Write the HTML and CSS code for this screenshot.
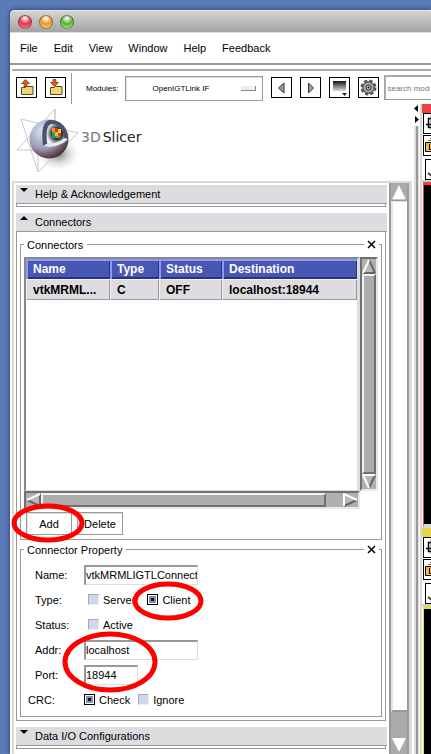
FILE: index.html
```
<!DOCTYPE html>
<html lang="en">
<head>
  <meta charset="UTF-8">
  <title>3D Slicer</title>
  <meta name="viewport" content="width=device-width, initial-scale=1.0">
  <link rel="stylesheet" href="styles.css">
</head>
<body>
  <div class="window">
    <div class="titlebar">
      <span class="light red"></span>
      <span class="light orange"></span>
      <span class="light green"></span>
    </div>

    <nav class="menubar">
      <a href="#">File</a>
      <a href="#">Edit</a>
      <a href="#">View</a>
      <a href="#">Window</a>
      <a href="#">Help</a>
      <a href="#">Feedback</a>
    </nav>

    <div class="toolbar">
      <button class="tool" aria-label="Load scene">
        <svg width="19" height="19" viewBox="0 0 19 19"><path d="M4.500 9.500h4l1-1h6.500v8h-11.500z" fill="#ecd67c" stroke="#5a4a18"/><path d="M8.500 1.500l4 4h-2.500v3h-3v-3h-2.500z" fill="#d9601a" stroke="#7a2c08" stroke-width=".7"/></svg>
      </button>
      <button class="tool" aria-label="Save scene">
        <svg width="19" height="19" viewBox="0 0 19 19"><path d="M4.500 9.500h4l1-1h6.500v8h-11.500z" fill="#ecd67c" stroke="#5a4a18"/><path d="M7 1.500h3v3h2.500l-4 4-4-4h2.500z" fill="#d9601a" stroke="#7a2c08" stroke-width=".7"/></svg>
      </button>
      <div class="modules">
        <label for="module">Modules:</label>
        <div class="module-select">
          <select id="module"><option>OpenIGTLink IF</option></select>
          <span class="knob"></span>
        </div>
      </div>
      <button class="tool" aria-label="Previous module">
        <svg width="19" height="19" viewBox="0 0 19 19"><path d="M12 5v10l-5.500-5z" fill="#999" stroke="#333"/></svg>
      </button>
      <button class="tool" aria-label="Next module">
        <svg width="19" height="19" viewBox="0 0 19 19"><path d="M7.500 5v10l5-5z" fill="#999" stroke="#333"/></svg>
      </button>
      <button class="tool" aria-label="Module history">
        <svg width="19" height="19" viewBox="0 0 19 19"><defs><linearGradient id="hist" x2="0" y2="1"><stop offset="0" stop-color="#111"/><stop offset="1" stop-color="#ddd"/></linearGradient></defs><path d="M3 3h13v10H3z" fill="url(#hist)"/><path d="M12 15h5l-2.500 3z" fill="#222"/></svg>
      </button>
      <button class="tool" aria-label="Module finder">
        <svg width="19" height="19" viewBox="0 0 19 19"><circle cx="9.500" cy="9.500" r="6.500" fill="#888" stroke="#555" stroke-width="3" stroke-dasharray="3.100 2"/><circle cx="9.500" cy="9.500" r="5.500" fill="#aaa" stroke="#555"/><circle cx="9.500" cy="9.500" r="2.500" fill="#ddd" stroke="#222"/><path d="M8.500 9.500h2M9.500 8.500v2" stroke="#000"/></svg>
      </button>
      <input class="search" type="text" aria-label="Search modules" placeholder="search modules">
    </div>

    <div class="main">
      <div class="left">
        <div class="logo">
          <svg width="66" height="66" viewBox="0 0 66 66">
            <defs>
              <radialGradient id="ball" cx=".35" cy=".3" r=".8"><stop offset="0" stop-color="#e2e4f0"/><stop offset=".55" stop-color="#9a9eb8"/><stop offset=".85" stop-color="#604048"/><stop offset="1" stop-color="#2a1d2c"/></radialGradient>
              <radialGradient id="shade"><stop offset="0" stop-color="#777"/><stop offset="1" stop-color="#fff" stop-opacity="0"/></radialGradient>
              <radialGradient id="core" cx=".6" cy=".5" r=".6"><stop offset="0" stop-color="#000"/><stop offset=".5" stop-color="#333"/><stop offset="1" stop-color="#f2f2f6"/></radialGradient>
            </defs>
            <ellipse cx="42" cy="46" rx="24" ry="18" fill="url(#shade)"/>
            <path d="M39 1L1 42h37zM5 11l57 14-40 39zM39 1v36M22 64V36" fill="none" stroke="#c8c8c8"/>
            <circle cx="33" cy="31" r="19.500" fill="url(#ball)"/>
            <path d="M27 38c-2-16 0-24 6-26 11-1 19 7 19 19-5 6-16 9-25 7z" fill="#4a5370"/>
            <path d="M27 38c5 2 18 1 25-7l-4-1c-5 4-11 5-16 5z" fill="#e4e6f0"/>
            <path d="M31 35c-1-12 0-17 4-19 8 0 13 6 13 14-4 4-10 5-17 5z" fill="url(#core)"/>
            <path d="M36 20h3v4h-3z" fill="#e8a020"/><path d="M39 20h3v4h-3z" fill="#d83020"/><path d="M42 21h3v4h-3z" fill="#f0d030"/>
            <path d="M36 24h3v4h-3z" fill="#30a040"/><path d="M39 24h3v4h-3z" fill="#f0c020"/><path d="M42 25h3v4h-3z" fill="#e04020"/>
            <path d="M36 28h4v2h-4z" fill="#2090c0"/><path d="M40 28h4v2h-4z" fill="#50b040"/>
          </svg>
          <div class="logo-text"><span>3D</span><b>Slicer</b></div>
        </div>

        <div class="scroll-area">
          <div class="panels">
            <section class="panel">
              <h2 class="closed">Help &amp; Acknowledgement</h2>
              <div class="panel-end"></div>
            </section>

            <section class="panel">
              <h2 class="open">Connectors</h2>
              <div class="panel-body">
                <div class="frame">
                  <div class="frame-title"><span>Connectors</span><button class="close" aria-label="Close connectors"><svg width="9" height="9" viewBox="0 0 9 9"><path d="M1 1l7 7M8 1L1 8" stroke="#000" stroke-width="1.500"/></svg></button></div>
                  <div class="frame-body list-body">
                    <div class="list">
                      <div class="list-main">
                        <table>
                          <thead>
                            <tr><th class="c-name">Name</th><th class="c-type">Type</th><th class="c-status">Status</th><th>Destination</th></tr>
                          </thead>
                          <tbody>
                            <tr><td>vtkMRML...</td><td>C</td><td>OFF</td><td>localhost:18944</td></tr>
                          </tbody>
                        </table>
                      </div>
                      <div class="vbar">
                        <svg width="14" height="15" viewBox="0 0 14 15"><path d="M7 1l6 13H1z" fill="#b8b8b8"/><path d="M13 14L7 1" stroke="#666" stroke-width="2"/><path d="M1 14h12" stroke="#666" stroke-width="2"/><path d="M1 14L7 1" stroke="#fff" stroke-width="2"/></svg>
                        <div class="vthumb"></div>
                        <svg width="14" height="15" viewBox="0 0 14 15"><path d="M1 1h12L7 14z" fill="#b8b8b8"/><path d="M13 1L7 14" stroke="#666" stroke-width="2"/><path d="M13 1H1l6 13" fill="none" stroke="#fff" stroke-width="2"/></svg>
                      </div>
                      <div class="hbar">
                        <svg width="15" height="14" viewBox="0 0 15 14"><path d="M1 7l13-6v12z" fill="#b8b8b8"/><path d="M14 1v12L1 7" fill="none" stroke="#666" stroke-width="2"/><path d="M1 7l13-6" stroke="#fff" stroke-width="2"/></svg>
                        <div class="hthumb"></div>
                        <svg width="15" height="14" viewBox="0 0 15 14"><path d="M1 1v12l13-6z" fill="#b8b8b8"/><path d="M1 13l13-6" stroke="#666" stroke-width="2"/><path d="M1 13V1l13 6" fill="none" stroke="#fff" stroke-width="2"/></svg>
                      </div>
                    </div>
                    <div class="buttons">
                      <button>Add</button>
                      <button>Delete</button>
                    </div>
                  </div>
                </div>

                <div class="frame">
                  <div class="frame-title"><span>Connector Property</span><button class="close" aria-label="Close connector property"><svg width="9" height="9" viewBox="0 0 9 9"><path d="M1 1l7 7M8 1L1 8" stroke="#000" stroke-width="1.500"/></svg></button></div>
                  <form class="frame-body props">
                    <div class="row">
                      <label for="name">Name:</label>
                      <input class="text" id="name" type="text" value="vtkMRMLIGTLConnector">
                    </div>
                    <div class="row">
                      <span class="caption">Type:</span>
                      <div class="choices indent">
                        <label><input type="radio" name="type">Server</label>
                        <label><input type="radio" name="type" checked>Client</label>
                      </div>
                    </div>
                    <div class="row">
                      <span class="caption">Status:</span>
                      <div class="choices indent">
                        <label><input type="checkbox">Active</label>
                      </div>
                    </div>
                    <div class="row">
                      <label for="addr">Addr:</label>
                      <input class="text" id="addr" type="text" value="localhost">
                    </div>
                    <div class="row">
                      <label for="port">Port:</label>
                      <input class="text short" id="port" type="text" value="18944">
                    </div>
                    <div class="row">
                      <span class="caption wide">CRC:</span>
                      <div class="choices">
                        <label><input type="radio" name="crc" checked>Check</label>
                        <label><input type="radio" name="crc">Ignore</label>
                      </div>
                    </div>
                  </form>
                </div>
              </div>
            </section>

            <section class="panel">
              <h2 class="closed">Data I/O Configurations</h2>
              <div class="panel-end"></div>
            </section>
          </div>

          <div class="main-bar">
            <svg width="16" height="18" viewBox="0 0 16 18"><path d="M8 2l7 15H1z" fill="#fff"/><path d="M1 17h14" stroke="#888"/></svg>
            <div class="main-thumb"></div>
            <svg width="16" height="18" viewBox="0 0 16 18"><path d="M1 2h14L8 16z" fill="#fff"/></svg>
          </div>
        </div>
      </div>

      <div class="splitter">
        <svg width="5" height="22" viewBox="0 0 5 22"><path d="M4 1v7L0 4.500zM1 12v7l4-3.500z"/></svg>
        <div class="sash"></div>
      </div>

      <div class="views">
        <div class="view red-view">
          <div class="view-bar"></div>
          <div class="view-tools">
            <button aria-label="Fit slice"><svg width="19" height="19" viewBox="0 0 19 19"><path d="M4.500 4.500h9v9h-9zM2 10.500h12M7.500 2v14" fill="none" stroke="#000" stroke-width="1.500"/></svg></button>
            <button aria-label="Labels"><svg width="19" height="19" viewBox="0 0 19 19"><path d="M4 4.500h12M6 2.500h12" stroke="#777"/><path d="M1.500 6.500h14v9h-14z" fill="#f4b942" stroke="#000"/><path d="M5.500 8v5.500h4" fill="none" stroke="#000"/></svg></button>
            <button class="inset" aria-label="Visibility"><svg width="19" height="19" viewBox="0 0 19 19"><path d="M2 13l4 3 5-3" fill="none" stroke="#444" stroke-width="2"/></svg></button>
          </div>
          <div class="slice"></div>
        </div>
        <div class="view yellow-view">
          <div class="view-bar"></div>
          <div class="view-tools">
            <button aria-label="Fit slice"><svg width="19" height="19" viewBox="0 0 19 19"><path d="M4.500 4.500h9v9h-9zM2 10.500h12M7.500 2v14" fill="none" stroke="#000" stroke-width="1.500"/></svg></button>
            <button aria-label="Labels"><svg width="19" height="19" viewBox="0 0 19 19"><path d="M4 4.500h12M6 2.500h12" stroke="#777"/><path d="M1.500 6.500h14v9h-14z" fill="#f4b942" stroke="#000"/><path d="M5.500 8v5.500h4" fill="none" stroke="#000"/></svg></button>
            <button class="inset" aria-label="Visibility"><svg width="19" height="19" viewBox="0 0 19 19"><path d="M2 13l4 3 5-3" fill="none" stroke="#444" stroke-width="2"/></svg></button>
          </div>
          <div class="slice"></div>
        </div>
      </div>
    </div>
  </div>

  <!-- red circles over the controls to use -->
  <svg class="marks" width="220" height="754" viewBox="0 0 220 754">
    <ellipse cx="48" cy="523" rx="34" ry="17"/>
    <ellipse cx="168" cy="601" rx="33" ry="17"/>
    <ellipse cx="110" cy="662" rx="45" ry="28"/>
  </svg>
</body>
</html>
```
FILE: styles.css
```
* {
  box-sizing: border-box;
}

body {
  margin: 0;
  padding: 10px 0 0 10px;
  height: 100vh;
  overflow: hidden;
  position: relative;
  background: #5a7ab8;
  color: #000;
  font: 11px "Liberation Sans", Arial, sans-serif;
}

button, input, select {
  font: inherit;
  color: inherit;
  border-radius: 0;
  margin: 0;
}

svg {
  display: block;
  flex: none;
}

.window {
  height: 100%;
  display: flex;
  flex-direction: column;
  background: #fff;
  border-top-left-radius: 5px;
  box-shadow: 0 0 5px rgba(0, 0, 40, 0.6);
}

.titlebar {
  height: 22px;
  flex: none;
  display: flex;
  align-items: center;
  gap: 7px;
  padding-left: 8px;
  background: linear-gradient(#d4d4d4, #a4a4a4);
  border-top: 1px solid #e8e8e8;
  border-top-left-radius: 5px;
}

.light {
  width: 14px;
  height: 14px;
  border: 1px solid rgba(60, 40, 40, 0.5);
  border-radius: 50%;
}

.red { background: radial-gradient(circle at 50% 20%, #fff, #e8324a 50%, #f99); }
.orange { background: radial-gradient(circle at 50% 20%, #fff, #e8962c 50%, #fe9); }
.green { background: radial-gradient(circle at 50% 20%, #fff, #58b030 50%, #cf9); }

.menubar {
  height: 33px;
  flex: none;
  display: flex;
  align-items: center;
  gap: 16px;
  padding: 0 10px;
  border-top: 1px solid #ddd;
  border-bottom: 2px solid #999;
}

.menubar a {
  color: #000;
  text-decoration: none;
}

.toolbar {
  flex: none;
  display: flex;
  align-items: center;
  gap: 8px;
  height: 35px;
  margin: 4px 0 0 2px;
  padding: 0 0 0 4px;
  border-top: 2px solid #aaa;
}

.tool {
  width: 21px;
  height: 21px;
  flex: none;
  padding: 0;
  background: #fff;
  border: 1px solid #000;
}

.modules {
  align-self: stretch;
  flex: none;
  display: flex;
  align-items: center;
  gap: 7px;
  margin-top: 2px;
  margin-left: -3px;
  padding-left: 14px;
  border-left: 1px solid #999;
  font-size: 8px;
}

.module-select {
  display: flex;
  align-items: center;
  width: 138px;
  height: 25px;
  border: 1px solid #999;
  box-shadow: inset 1px 1px #ddd;
}

.module-select select {
  flex: 1;
  min-width: 0;
  height: 22px;
  padding: 0 0 0 26px;
  appearance: none;
  background: none;
  border: 0;
}

.knob {
  width: 15px;
  height: 5px;
  margin-right: 6px;
  background: #eee;
  border-right: 1px solid #888;
  border-bottom: 1px solid #888;
}

.search {
  flex: 1;
  min-width: 0;
  width: 0;
  height: 25px;
  padding: 0 1px;
  margin-left: -3px;
  border: 0;
  border-left: 2px solid #aaa;
  border-top: 2px solid #aaa;
  border-bottom: 1px solid #999;
  font-size: 8px;
}

.search::placeholder {
  color: #777;
}

.main {
  flex: 1;
  min-height: 0;
  display: flex;
}

.left {
  flex: 1;
  min-width: 0;
  display: flex;
  flex-direction: column;
  padding-left: 2px;
}

.logo {
  height: 77px;
  flex: none;
  display: flex;
  align-items: center;
  padding: 0 0 4px 4px;
}

.logo-text {
  display: flex;
  gap: 2px;
  margin-left: -1px;
  padding-bottom: 8px;
  color: #777;
  font: 14px "DejaVu Sans", sans-serif;
}

.logo-text b {
  color: #222;
  font-weight: normal;
}

.scroll-area {
  flex: 1;
  min-height: 0;
  display: flex;
  border: 2px solid #dcdad6;
  border-right-width: 3px;
  border-bottom: 0;
}

.panels {
  flex: 1;
  min-width: 0;
  overflow: hidden;
  padding: 2px 2px 0 2px;
}

.panel {
  margin-bottom: 6px;
}

.panel h2 {
  height: 19px;
  margin: 0;
  display: flex;
  align-items: center;
  background: #dedce1;
  border-bottom: 1px solid #999;
  font-size: 11px;
  font-weight: normal;
}

.panel h2::before {
  content: "";
  margin: 0 7px 8px 4px;
  border: 4px solid transparent;
  border-width: 0 4px;
}

.panel .closed::before {
  border-top: 4px solid #000;
}

.panel .open::before {
  border-bottom: 4px solid #000;
}

.panel-end {
  height: 3px;
  margin-right: 1px;
  border: 1px solid #999;
  border-top: 0;
}

.panel-body {
  margin-right: 1px;
  padding: 6px 3px 3px;
  border: 1px solid #999;
  border-top: 0;
}

.frame + .frame {
  margin-top: 3px;
}

.frame-title {
  display: flex;
  align-items: center;
  gap: 3px;
  height: 13px;
}

.frame-title::before {
  content: "";
  width: 4px;
  height: 1px;
  background: #999;
}

.frame-title span {
  flex: 1;
  display: flex;
  align-items: center;
  gap: 4px;
}

.frame-title span::after {
  content: "";
  flex: 1;
  height: 1px;
  background: #999;
}

.frame-title::after {
  content: "";
  width: 3px;
  height: 1px;
  background: #999;
}

.close {
  padding: 0;
  border: 0;
  background: none;
}

.frame-body {
  margin-top: -7px;
  border: 1px solid #999;
  border-top: 0;
}

.list-body {
  padding: 13px 3px 4px;
}

.list {
  display: grid;
  grid-template-columns: 1fr 18px;
  grid-template-rows: 234px 18px;
}

.list-main {
  min-width: 0;
  border: 2px solid #888;
  border-right: 3px solid #ddd;
  border-bottom: 1px solid #ddd;
}

table {
  width: 100%;
  table-layout: fixed;
  border-collapse: collapse;
  font-size: 12px;
  font-weight: bold;
}

th, td {
  height: 20px;
  padding: 0 0 0 7px;
  text-align: left;
  white-space: nowrap;
  overflow: hidden;
}

th {
  color: #fff;
  background: #4757b3;
  box-shadow: inset 2px 2px #8f98f5, inset -1px -2px #28347c;
}

td {
  height: 21px;
  background: #dedce1;
  box-shadow: inset 1px 1px #f4f4f6, inset -1px -1px #999;
}

.c-name { width: 84px; }
.c-type { width: 49px; }
.c-status { width: 63px; }

.vbar, .hbar {
  display: flex;
  justify-content: space-between;
  background: #b0b0b0;
  border: 2px solid #707070;
  border-right-color: #e8e8e8;
  border-bottom-color: #e8e8e8;
}

.vbar {
  flex-direction: column;
}

.vthumb, .hthumb {
  background: #adadad;
  border: 2px solid #f2f2f2;
  border-right-color: #707070;
  border-bottom-color: #707070;
}

.vthumb {
  flex: 1;
}

.hthumb {
  flex: 1;
  margin-right: 17px;
}

.buttons {
  display: flex;
  gap: 5px;
  margin-top: 3px;
  padding-left: 2px;
}

.buttons button {
  width: 46px;
  height: 23px;
  padding: 0;
  background: #fff;
  border: 1px solid #999;
  box-shadow: inset 1px 1px #ddd;
}

.props {
  display: flex;
  flex-direction: column;
  gap: 4px;
  padding: 15px 3px 6px;
}

.row {
  display: flex;
  align-items: center;
  height: 21px;
}

.row > label, .caption {
  width: 60px;
  padding-left: 11px;
}

.row .wide {
  padding-left: 4px;
}

.text {
  width: 114px;
  height: 20px;
  padding: 0;
  background: #fff;
  border: 1px solid #ddd;
  border-left: 2px solid #999;
  border-top: 2px solid #999;
}

.short {
  width: 54px;
}

.choices {
  display: flex;
  gap: 8px;
}

.indent {
  gap: 12px;
  padding-left: 4px;
}

.choices label {
  display: flex;
  align-items: center;
  gap: 4px;
}

.choices input {
  appearance: none;
  width: 11px;
  height: 11px;
  background: #ccd8ec;
  border: 1px solid #aaa;
  border-right-color: #eee;
  border-bottom-color: #eee;
}

.choices input:checked {
  background: #111;
  border: 1px solid #000;
  box-shadow: inset 0 0 0 1px #fff, inset 0 0 0 3px #8490ac;
}

.main-bar {
  width: 20px;
  flex: none;
  display: flex;
  flex-direction: column;
  background: #aaa;
  border-left: 2px solid #999;
  border-right: 2px solid #999;
}

.main-thumb {
  flex: 1;
  margin-bottom: 24px;
  background: #fff;
  border-left: 2px solid #e4e4e4;
  border-top: 1px solid #e4e4e4;
  border-bottom: 2px solid #999;
}

.splitter {
  width: 8px;
  flex: none;
  display: flex;
  flex-direction: column;
  align-items: center;
}

.sash {
  flex: 1;
  width: 5px;
  background: #999;
  border-left: 2px solid #ddd;
  border-right: 1px solid #ddd;
}

.views {
  width: 11px;
  flex: none;
  display: flex;
  flex-direction: column;
  overflow: hidden;
  border-left: 2px solid #d8d8d8;
}

.view {
  display: flex;
  flex-direction: column;
  overflow: hidden;
}

.red-view {
  flex: 424;
  --tone: #ee4040;
}

.yellow-view {
  flex: 226;
  --tone: #e4d84a;
}

.view-bar {
  height: 9px;
  flex: none;
  background: var(--tone);
}

.view-tools {
  height: 69px;
  flex: none;
  display: flex;
  flex-direction: column;
  gap: 1px;
  padding-left: 1px;
  background: #fff;
  border-bottom: 2px solid #ccc;
}

.view-tools button {
  width: 21px;
  height: 21px;
  flex: none;
  padding: 0;
  background: #fff;
  border: 1px solid #000;
}

.view-tools .inset {
  margin: 2px 0 0 2px;
}

.slice {
  flex: 1;
  margin-left: 1px;
  background: #000;
  border-top: 3px solid var(--tone);
  border-left: 1px solid var(--tone);
}

.red-view .slice {
  border-bottom: 4px solid #d8d8d8;
}

.marks {
  position: absolute;
  left: 0;
  top: 0;
  fill: none;
  stroke: #f00;
  stroke-width: 5;
  pointer-events: none;
}
```
